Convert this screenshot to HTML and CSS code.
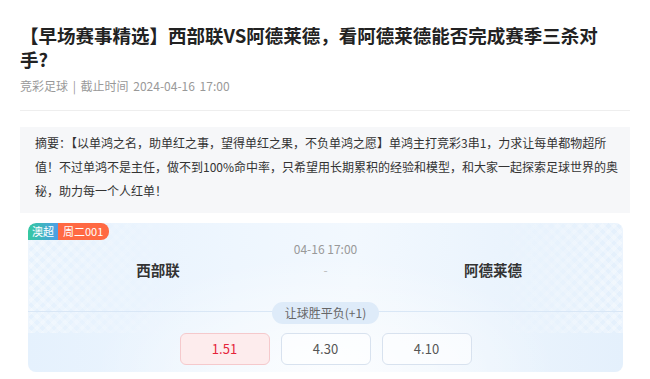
FILE: index.html
```html
<!DOCTYPE html>
<html lang="zh-CN">
<head>
    <meta charset="UTF-8">
    <meta name="viewport" content="width=device-width, initial-scale=1.0">
    <title>早场赛事精选</title>
    <link rel="stylesheet" href="styles.css">
</head>
<body>
    <div class="article">
        <h1 class="title">【早场赛事精选】西部联VS阿德莱德，看阿德莱德能否完成赛季三杀对手?</h1>
        <div class="meta">竞彩足球 | 截止时间 2024-04-16 17:00</div>

        <div class="summary">
            摘要：【以单鸿之名，助单红之事，望得单红之果，不负单鸿之愿】单鸿主打竞彩3串1，力求让每单都物超所值！不过单鸿不是主任，做不到100%命中率，只希望用长期累积的经验和模型，和大家一起探索足球世界的奥秘，助力每一个人红单！
        </div>

        <div class="match-card">
            <div class="tags">
                <span class="tag-league">澳超</span>
                <span class="tag-num">周二001</span>
            </div>
            <div class="teams">
                <div class="team">西部联</div>
                <div class="middle">
                    <div class="time">04-16 17:00</div>
                    <div class="score">-</div>
                </div>
                <div class="team">阿德莱德</div>
            </div>
            <div class="play">
                <span class="play-name">让球胜平负(+1)</span>
            </div>
            <div class="odds">
                <div class="odd selected">1.51</div>
                <div class="odd">4.30</div>
                <div class="odd">4.10</div>
            </div>
        </div>
    </div>
</body>
</html>
```

FILE: styles.css
```css
body {
    margin: 0;
    padding: 0;
    background: #fff;
    font-family: "Noto Sans CJK SC", "Noto Sans", sans-serif;
    color: #333;
}
.article {
    padding: 23px 20px 0 20px;
}
.title {
    max-width: 590px;
    margin: 0;
    font-size: 18.5px;
    line-height: 24px;
    font-weight: bold;
    color: #222;
}
.meta {
    margin-top: 6px;
    padding-bottom: 15px;
    font-size: 12px;
    line-height: 18px;
    word-spacing: 2px;
    color: #999;
    border-bottom: 1px solid #eee;
}
.summary {
    margin-top: 16px;
    padding: 4px 11px 10px 15px;
    background-color: #f6f7f9;
    font-size: 12px;
    line-height: 24px;
    color: #333;
}
.match-card {
    position: relative;
    margin: 10px 7px 0 8px;
    padding-bottom: 7px;
    border-radius: 8px;
    overflow: hidden;
    background:
        radial-gradient(ellipse at 50% 100%, rgba(255, 255, 255, 0.75), rgba(255, 255, 255, 0) 55%),
        linear-gradient(90deg, #e5f1fd 0%, #eef6fe 35%, #f2f8fe 55%, #e4f0fc 100%);
}
.match-card::before {
    content: "";
    position: absolute;
    left: 0;
    top: 0;
    right: 0;
    height: 110px;
    background:
        repeating-linear-gradient(45deg, rgba(255, 255, 255, 0.3) 0 4px, rgba(255, 255, 255, 0) 4px 8px),
        repeating-linear-gradient(-45deg, rgba(255, 255, 255, 0.3) 0 4px, rgba(255, 255, 255, 0) 4px 8px);
    -webkit-mask-image: linear-gradient(90deg, #000 0%, rgba(0, 0, 0, 0) 25%, rgba(0, 0, 0, 0) 78%, #000 100%);
    mask-image: linear-gradient(90deg, #000 0%, rgba(0, 0, 0, 0) 25%, rgba(0, 0, 0, 0) 78%, #000 100%);
    pointer-events: none;
}
.tags {
    position: absolute;
    left: 0;
    top: 0;
    display: flex;
    font-size: 11px;
    line-height: 17px;
    color: #fff;
    z-index: 1;
}
.tag-league {
    padding: 0 4px;
    background: linear-gradient(90deg, #35c9a0, #4d9de6);
    border-top-left-radius: 8px;
}
.tag-num {
    padding: 0 6px 0 5px;
    background-color: #ff6943;
    border-bottom-right-radius: 8px;
    border-top-right-radius: 8px;
}
.teams {
    position: relative;
    display: grid;
    grid-template-columns: 260px 1fr 260px;
}
.team {
    align-self: end;
    text-align: center;
    font-size: 14.5px;
    line-height: 24px;
    font-weight: 600;
    color: #333;
}
.middle {
    padding-top: 17px;
    text-align: center;
    color: #999;
    font-size: 12px;
}
.time {
    line-height: 18px;
}
.score {
    line-height: 24px;
    color: #bbb;
}
.play {
    position: relative;
    margin-top: 17px;
    text-align: center;
    background: linear-gradient(#d9e7f6, #d9e7f6) center / 100% 1px no-repeat;
}
.play-name {
    display: inline-block;
    padding: 0 13px;
    font-size: 12px;
    line-height: 22px;
    color: #666;
    background-color: #deebf9;
    border-radius: 11px;
}
.odds {
    position: relative;
    display: flex;
    justify-content: center;
    gap: 11px;
    margin-top: 9px;
}
.odd {
    width: 88px;
    height: 30px;
    line-height: 30px;
    text-align: center;
    font-size: 13px;
    color: #555;
    background-color: rgba(255, 255, 255, 0.55);
    border: 1px solid #d8e2ef;
    border-radius: 6px;
}
.odd.selected {
    color: #e5233a;
    background-color: #fdeced;
    border-color: #f5c9cc;
}
```
